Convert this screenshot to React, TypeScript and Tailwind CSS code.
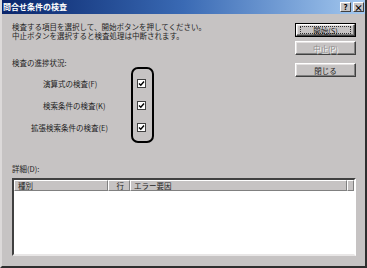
import React from "react";

const font = { fontFamily: '"Noto Sans CJK JP", "Noto Sans", sans-serif' };

type BtnProps = {
	label: string;
	isDefault?: boolean;
	disabled?: boolean;
};

function Btn({ label, isDefault, disabled }: BtnProps) {
	const face = (
		<div className="flex h-full w-full items-center justify-center border border-t-white border-l-white border-r-[#404040] border-b-[#404040] bg-[#c6c3c3] shadow-[inset_-1px_-1px_0_#808080,inset_1px_1px_0_#e4e1e1]">
			{isDefault ? (
				<div className="flex h-[8px] w-[51px] items-center justify-center border border-dotted border-[#303030]">
					<span className="text-[7.5px] leading-[9px] text-[#1e1e1e]">{label}</span>
				</div>
			) : (
				<span
					className={
						disabled
							? "text-[7.5px] leading-[9px] text-[#8c8a8a] [text-shadow:1px_1px_0_#ffffff]"
							: "text-[7.5px] leading-[9px] text-[#1e1e1e]"
					}
				>
					{label}
				</span>
			)}
		</div>
	);
	if (isDefault) {
		return <div className="h-[14px] w-[61px] border border-black">{face}</div>;
	}
	return <div className="h-[14px] w-[61px]">{face}</div>;
}

function Check() {
	return (
		<div className="flex h-[9px] w-[9px] items-center justify-center border border-[#404040] bg-white">
			<svg width="7" height="7" viewBox="0 0 7 7">
				<path d="M1 3.5 L2.8 5.3 L6 1.5" stroke="#000" strokeWidth="1.4" fill="none" />
			</svg>
		</div>
	);
}

const items = [
	{ label: "演算式の検査(F)", pad: "pl-[31px]" },
	{ label: "検索条件の検査(K)", pad: "pl-[31px]" },
	{ label: "拡張検索条件の検査(E)", pad: "pl-[19px]" },
];

export default function App() {
	return (
		<div
			className="relative h-[268px] w-[367px] overflow-hidden border-b-2 border-l-2 border-r-2 border-b-[#2e2e2e] border-l-[#dcd9d9] border-r-[#2e2e2e] bg-[#c6c3c3] text-[#1e1e1e]"
			style={font}
		>
			{/* title bar */}
			<div className="-ml-[2px] -mr-[2px] flex h-[14px] items-center justify-between bg-gradient-to-r from-[#0a246a] via-[#3a6ab4] to-[#a6caf0] pl-[3px] pr-[3px]">
				<span className="text-[8px] font-bold leading-[10px] text-white">問合せ条件の検査</span>
				<div className="flex gap-[2px]">
					<div className="flex h-[10px] w-[11px] items-center justify-center border border-t-white border-l-white border-r-[#404040] border-b-[#404040] bg-[#c6c3c3] text-[8px] font-bold leading-none text-black">
						?
					</div>
					<div className="flex h-[10px] w-[11px] items-center justify-center border border-t-white border-l-white border-r-[#404040] border-b-[#404040] bg-[#c6c3c3] text-[9px] font-bold leading-none text-black">
						×
					</div>
				</div>
			</div>

			<div className="pl-[10px] pr-[9px]">
				<div className="flex justify-between">
					<div className="pt-[8px]">
						<p className="text-[7.5px] leading-[9px]">
							検査する項目を選択して、開始ボタンを押してください。
							<br />
							中止ボタンを選択すると検査処理は中断されます。
						</p>
						<p className="mt-[18px] text-[7.5px] leading-[9px]">検査の進捗状況:</p>
						<div className="mt-[5px]">
							{items.map((it) => (
								<div key={it.label} className="grid h-[22px] grid-cols-[125px_9px] items-center">
									<span className={`${it.pad} text-[7.5px] leading-[9px]`}>{it.label}</span>
									<Check />
								</div>
							))}
						</div>
					</div>
					<div className="flex flex-col pt-[9px]">
						<Btn label="開始(S)" isDefault />
						<div className="mt-[4px]">
							<Btn label="中止(P)" disabled />
						</div>
						<div className="mt-[8px]">
							<Btn label="閉じる" />
						</div>
					</div>
				</div>

				<p className="mt-[26px] text-[7.5px] leading-[9px]">詳細(D):</p>
				<div className="mt-[5px] h-[78px] border-2 border-t-[#404040] border-l-[#404040] border-r-white border-b-[#e8e6e6] bg-white">
					<div className="flex h-[11px] bg-[#c6c3c3] text-[7.5px] leading-[9px]">
						<div className="w-[94px] border border-t-white border-l-white border-r-[#808080] border-b-[#808080] pl-[3px]">種別</div>
						<div className="w-[22px] border border-t-white border-l-white border-r-[#808080] border-b-[#808080] pr-[5px] text-right">行</div>
						<div className="w-[217px] border border-t-white border-l-white border-r-[#808080] border-b-[#808080] pl-[3px]">エラー要因</div>
						<div className="flex-1 border border-t-white border-l-white border-r-[#808080] border-b-[#808080]" />
					</div>
				</div>
			</div>

			{/* highlight ring drawn over the checkboxes */}
			<div className="pointer-events-none absolute left-[129px] top-[67px] h-[76px] w-[23px] rounded-[7px] border-2 border-black" />
		</div>
	);
}
